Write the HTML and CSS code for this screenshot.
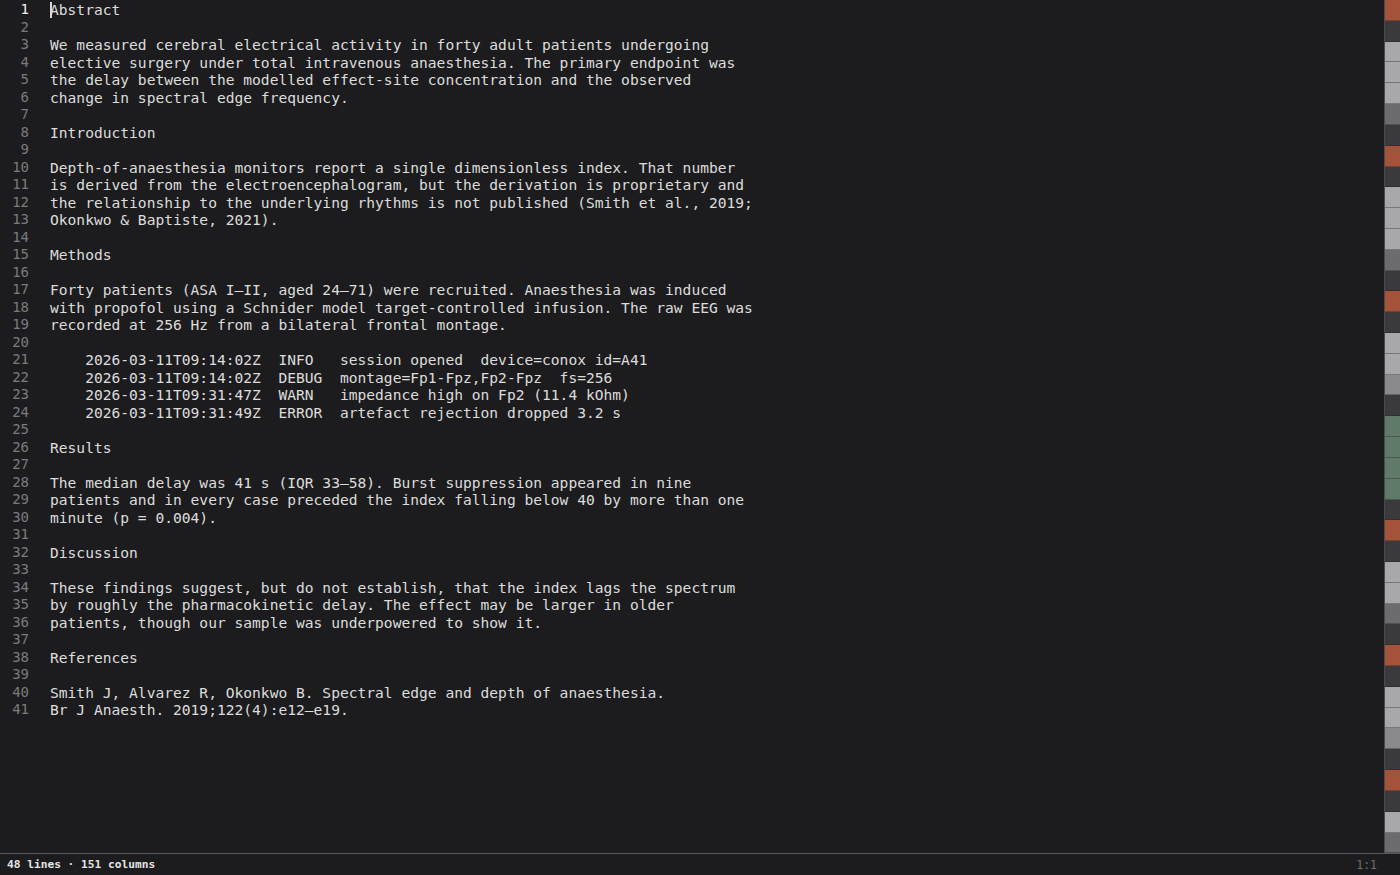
FILE: index.html
```html
<!DOCTYPE html>
<html lang="en">
<head>
<meta charset="utf-8">
<title>Editor</title>
<link rel="stylesheet" href="styles.css">
</head>
<body>
<div class="app">
  <div class="editor">
    <div class="content">
      <div class="line current"><span class="ln">1</span><span class="tx"><span class="cursor"></span>Abstract</span></div>
      <div class="line"><span class="ln">2</span><span class="tx"></span></div>
      <div class="line"><span class="ln">3</span><span class="tx">We measured cerebral electrical activity in forty adult patients undergoing</span></div>
      <div class="line"><span class="ln">4</span><span class="tx">elective surgery under total intravenous anaesthesia. The primary endpoint was</span></div>
      <div class="line"><span class="ln">5</span><span class="tx">the delay between the modelled effect-site concentration and the observed</span></div>
      <div class="line"><span class="ln">6</span><span class="tx">change in spectral edge frequency.</span></div>
      <div class="line"><span class="ln">7</span><span class="tx"></span></div>
      <div class="line"><span class="ln">8</span><span class="tx">Introduction</span></div>
      <div class="line"><span class="ln">9</span><span class="tx"></span></div>
      <div class="line"><span class="ln">10</span><span class="tx">Depth-of-anaesthesia monitors report a single dimensionless index. That number</span></div>
      <div class="line"><span class="ln">11</span><span class="tx">is derived from the electroencephalogram, but the derivation is proprietary and</span></div>
      <div class="line"><span class="ln">12</span><span class="tx">the relationship to the underlying rhythms is not published (Smith et al., 2019;</span></div>
      <div class="line"><span class="ln">13</span><span class="tx">Okonkwo &amp; Baptiste, 2021).</span></div>
      <div class="line"><span class="ln">14</span><span class="tx"></span></div>
      <div class="line"><span class="ln">15</span><span class="tx">Methods</span></div>
      <div class="line"><span class="ln">16</span><span class="tx"></span></div>
      <div class="line"><span class="ln">17</span><span class="tx">Forty patients (ASA I–II, aged 24–71) were recruited. Anaesthesia was induced</span></div>
      <div class="line"><span class="ln">18</span><span class="tx">with propofol using a Schnider model target-controlled infusion. The raw EEG was</span></div>
      <div class="line"><span class="ln">19</span><span class="tx">recorded at 256 Hz from a bilateral frontal montage.</span></div>
      <div class="line"><span class="ln">20</span><span class="tx"></span></div>
      <div class="line"><span class="ln">21</span><span class="tx">    2026-03-11T09:14:02Z  INFO   session opened  device=conox id=A41</span></div>
      <div class="line"><span class="ln">22</span><span class="tx">    2026-03-11T09:14:02Z  DEBUG  montage=Fp1-Fpz,Fp2-Fpz  fs=256</span></div>
      <div class="line"><span class="ln">23</span><span class="tx">    2026-03-11T09:31:47Z  WARN   impedance high on Fp2 (11.4 kOhm)</span></div>
      <div class="line"><span class="ln">24</span><span class="tx">    2026-03-11T09:31:49Z  ERROR  artefact rejection dropped 3.2 s</span></div>
      <div class="line"><span class="ln">25</span><span class="tx"></span></div>
      <div class="line"><span class="ln">26</span><span class="tx">Results</span></div>
      <div class="line"><span class="ln">27</span><span class="tx"></span></div>
      <div class="line"><span class="ln">28</span><span class="tx">The median delay was 41 s (IQR 33–58). Burst suppression appeared in nine</span></div>
      <div class="line"><span class="ln">29</span><span class="tx">patients and in every case preceded the index falling below 40 by more than one</span></div>
      <div class="line"><span class="ln">30</span><span class="tx">minute (p = 0.004).</span></div>
      <div class="line"><span class="ln">31</span><span class="tx"></span></div>
      <div class="line"><span class="ln">32</span><span class="tx">Discussion</span></div>
      <div class="line"><span class="ln">33</span><span class="tx"></span></div>
      <div class="line"><span class="ln">34</span><span class="tx">These findings suggest, but do not establish, that the index lags the spectrum</span></div>
      <div class="line"><span class="ln">35</span><span class="tx">by roughly the pharmacokinetic delay. The effect may be larger in older</span></div>
      <div class="line"><span class="ln">36</span><span class="tx">patients, though our sample was underpowered to show it.</span></div>
      <div class="line"><span class="ln">37</span><span class="tx"></span></div>
      <div class="line"><span class="ln">38</span><span class="tx">References</span></div>
      <div class="line"><span class="ln">39</span><span class="tx"></span></div>
      <div class="line"><span class="ln">40</span><span class="tx">Smith J, Alvarez R, Okonkwo B. Spectral edge and depth of anaesthesia.</span></div>
      <div class="line"><span class="ln">41</span><span class="tx">Br J Anaesth. 2019;122(4):e12–e19.</span></div>
    </div>
    <div class="minimap">
      <div class="mm head"></div>
      <div class="mm blank"></div>
      <div class="mm full"></div>
      <div class="mm full"></div>
      <div class="mm full"></div>
      <div class="mm short"></div>
      <div class="mm blank"></div>
      <div class="mm head"></div>
      <div class="mm blank"></div>
      <div class="mm full"></div>
      <div class="mm full"></div>
      <div class="mm full"></div>
      <div class="mm short"></div>
      <div class="mm blank"></div>
      <div class="mm head"></div>
      <div class="mm blank"></div>
      <div class="mm full"></div>
      <div class="mm full"></div>
      <div class="mm mid"></div>
      <div class="mm blank"></div>
      <div class="mm code"></div>
      <div class="mm code"></div>
      <div class="mm code"></div>
      <div class="mm code"></div>
      <div class="mm blank"></div>
      <div class="mm head"></div>
      <div class="mm blank"></div>
      <div class="mm full"></div>
      <div class="mm full"></div>
      <div class="mm short"></div>
      <div class="mm blank"></div>
      <div class="mm head"></div>
      <div class="mm blank"></div>
      <div class="mm full"></div>
      <div class="mm full"></div>
      <div class="mm mid"></div>
      <div class="mm blank"></div>
      <div class="mm head"></div>
      <div class="mm blank"></div>
      <div class="mm full"></div>
      <div class="mm short"></div>
    </div>
  </div>
  <div class="status">
    <span class="status-left">48 lines · 151 columns</span>
    <span class="status-right">1:1</span>
  </div>
</div>
</body>
</html>
```

FILE: styles.css
```css
html, body {
  margin: 0;
  padding: 0;
  height: 100%;
  background: #1c1c1e;
}

.app {
  height: 875px;
  display: flex;
  flex-direction: column;
  background: #1c1c1e;
  overflow: hidden;
}

.editor {
  flex: 1;
  display: flex;
  min-height: 0;
}

.content {
  flex: 1;
  padding-top: 1px;
  font-family: "DejaVu Sans Mono", "Liberation Mono", monospace;
  font-size: 14.6px;
  line-height: 17.5px;
  color: #dcdcdc;
}

.line {
  display: flex;
  height: 17.5px;
  white-space: pre;
}

.ln {
  width: 29px;
  flex: none;
  text-align: right;
  color: #7b7b7f;
  font-size: 14px;
}

.current .ln {
  color: #f2f2f2;
}

.tx {
  margin-left: 21px;
  position: relative;
}

.cursor {
  position: absolute;
  left: 0;
  top: 1px;
  width: 1.5px;
  height: 16px;
  background: #d8d8d8;
}

.minimap {
  width: 15px;
  flex: none;
  display: flex;
  flex-direction: column;
  border-left: 1px solid #4a4a4d;
  background: #1c1c1e;
}

.mm {
  flex: 1;
  border-bottom: 1px solid rgba(28, 28, 30, 0.35);
}

.mm.head { background: #a4533a; }
.mm.blank { background: #3a3a3c; }
.mm.full { background: #a8a8ab; }
.mm.mid { background: #8a8a8d; }
.mm.short { background: #6c6c6f; }
.mm.code { background: #5f7a68; }

.status {
  height: 21px;
  flex: none;
  border-top: 1px solid #58585b;
  display: flex;
  align-items: center;
  justify-content: space-between;
  padding: 0 23px 0 7px;
  font-family: "DejaVu Sans Mono", "Liberation Mono", monospace;
  background: #1c1c1e;
}

.status-left {
  font-size: 11.2px;
  font-weight: bold;
  color: #e4e4e4;
}

.status-right {
  font-size: 11.5px;
  color: #6f6f72;
}
```
